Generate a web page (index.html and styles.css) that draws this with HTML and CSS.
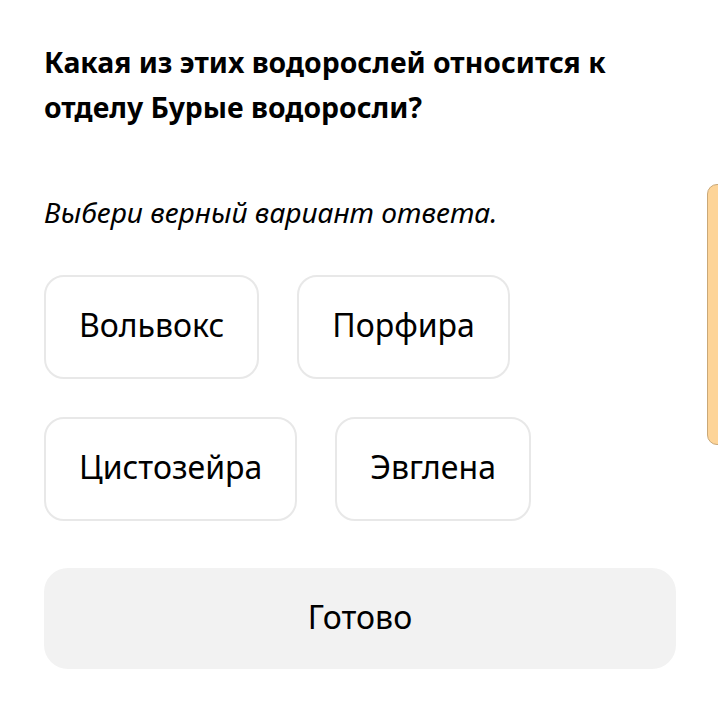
FILE: index.html
```html
<!DOCTYPE html>
<html lang="ru">
  <head>
    <meta charset="UTF-8" />
    <meta name="viewport" content="width=device-width, initial-scale=1.0" />
    <title>Вопрос</title>
    <link rel="stylesheet" href="styles.css">
  </head>
  <body>
    <div class="task">
      <h1 class="question">Какая из этих водорослей относится к отделу Бурые водоросли?</h1>
      <p class="hint">Выбери верный вариант ответа.</p>

      <div class="options">
        <div class="row">
          <button class="option">Вольвокс</button>
          <button class="option">Порфира</button>
        </div>
        <div class="row">
          <button class="option">Цистозейра</button>
          <button class="option">Эвглена</button>
        </div>
      </div>

      <button class="done">Готово</button>
    </div>

    <!-- side tab peeking from the right edge -->
    <div class="side-tab"></div>
  </body>
</html>
```

FILE: styles.css
```css
/* Page */
html,
body {
  margin: 0;
  background: #fff;
  font-family: "Noto Sans", "Open Sans", sans-serif;
  color: #000;
}

body {
  position: relative;
  height: 723px;
  overflow: hidden;
}

.task {
  padding: 40px 42px 0 44px;
}

/* Question */
.question {
  margin: 0;
  font-size: 28.4px;
  font-weight: 700;
  line-height: 45px;
  width: 620px;
}

.hint {
  margin: 62px 0 0;
  font-size: 28.2px;
  font-style: italic;
  line-height: 40px;
}

/* Answer buttons */
.options {
  margin-top: 43px;
  display: flex;
  flex-direction: column;
  gap: 38px;
}

.row {
  display: flex;
  gap: 38px;
}

.option {
  height: 104px;
  padding: 0 33px 6px;
  background: #fff;
  border: 2px solid #e8e8e8;
  border-radius: 20px;
  font-family: inherit;
  font-size: 32px;
  color: #000;
}

.done {
  display: block;
  margin-top: 47px;
  width: 632px;
  height: 101px;
  padding-bottom: 5px;
  border: none;
  border-radius: 24px;
  background: #f2f2f2;
  font-family: inherit;
  font-size: 32px;
  color: #000;
}

/* Orange tab at the right edge */
.side-tab {
  position: absolute;
  top: 184px;
  left: 707px;
  width: 30px;
  height: 259px;
  background: #fdd498;
  border: 1px solid #c9a878;
  border-radius: 10px;
}
```
